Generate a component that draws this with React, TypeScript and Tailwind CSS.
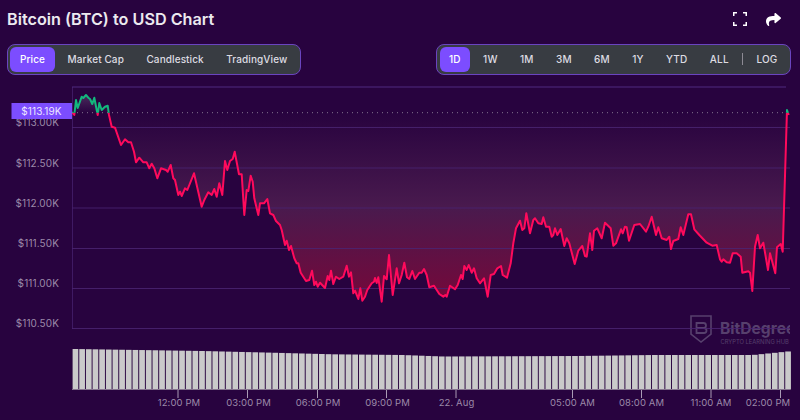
import { FaShare } from "react-icons/fa";

const line: number[][] = [
  [72, 112], [74.3, 115], [76, 100], [77.7, 108], [81.7, 96.7], [83.3, 98], [86, 95], [88.3, 97.7], [90, 99], [92.3, 104],
  [94.3, 97.7], [96.7, 110], [97.7, 115], [99.3, 103], [101.7, 110], [105, 106.7], [107.7, 105.7], [109, 115], [111.7, 126.7], [115, 127.7],
  [121, 145], [125, 139.3], [128.3, 142.3], [131, 142.3], [134, 151.7], [136, 162.3], [139.3, 157.7], [143.3, 162.3], [146.7, 162.3], [149.3, 168.3],
  [151.7, 163.7], [154.3, 168.3], [157.3, 178.3], [161, 168.3], [166, 170], [167.7, 171.7], [170.7, 165], [173.3, 178.3], [175, 180], [178.3, 195],
  [180, 191.7], [181.7, 196], [185, 188.3], [187.3, 190], [194, 173.3], [201.7, 206.7], [204.3, 200], [208.3, 192.3], [211.7, 195], [214.3, 189],
  [216.7, 196.7], [219.3, 183.3], [222.3, 195], [225, 161], [227.3, 170], [230, 161], [232.7, 159], [234.7, 151.7], [239, 174.3], [241.7, 174.3],
  [244.3, 215], [246.7, 190], [248.3, 191], [250.7, 175.7], [252.7, 181.7], [254.3, 198.3], [258.3, 215], [260, 203.3], [264, 203.3], [267.3, 199],
  [270, 213.3], [273.3, 215], [276, 221], [280, 225], [281.7, 230], [285, 245], [286.7, 240.7], [289, 250], [291, 246], [294.3, 258.3],
  [296.7, 263.3], [298.3, 263.3], [300.7, 272.7], [306, 281], [309.3, 280], [312, 270.7], [314.3, 285], [316, 281.7], [317.7, 286.7], [320, 282.7],
  [325, 288], [327.7, 276], [329.3, 280], [331, 270.7], [333.3, 284], [336, 276.7], [339.3, 279], [343.3, 276.7], [346.7, 265.7], [349, 276.7],
  [351, 272.3], [353.3, 293.3], [355, 290.7], [358.3, 299], [360.3, 288.3], [362.3, 300.7], [365, 296.7], [367.3, 290], [371.7, 283.3], [374, 281.7],
  [375, 278], [376.7, 283], [378.3, 277.3], [381.7, 301.7], [384, 276], [386.7, 279.3], [389, 255], [392.7, 295], [396.7, 268.3], [399, 283.3],
  [401.7, 275], [404.3, 262.7], [407, 277.3], [409.3, 279], [412.3, 271], [415, 279], [419.3, 272.7], [421.7, 272.7], [424, 269], [426.7, 275],
  [429.3, 287.3], [434, 285.7], [439.3, 294], [443.3, 296.7], [445.3, 295], [446.7, 296.7], [450, 285.7], [455, 289.3], [457.7, 285], [461, 275],
  [462.7, 279], [464.3, 266], [466.7, 270], [468.7, 265], [471.7, 272.7], [474, 268.3], [476.7, 278.3], [480, 283.3], [484, 278.3], [487.7, 296.7],
  [490.7, 275], [494, 274], [497.3, 268.3], [501, 266], [502.7, 275], [507, 277.7], [510.7, 263.3], [513.3, 243.3], [516, 228.3], [520, 220.7],
  [522.3, 230], [524.3, 228.3], [526.3, 213.3], [530, 233.3], [533.3, 220], [535, 218.3], [538.3, 223.3], [541.7, 224], [543.3, 217.3], [546, 226.7],
  [549.3, 226.7], [551.7, 236.7], [553.3, 235], [555, 228.3], [557.3, 235], [560.7, 229], [564.3, 246], [566.7, 238.3], [569.3, 243.3], [574.7, 264],
  [578.3, 250.7], [582.3, 246], [585, 256], [586.7, 256.7], [590, 233.3], [592.3, 250], [594, 230.7], [597.3, 228.3], [601.7, 238.3], [605, 222.7],
  [610.7, 228.3], [613.3, 245.7], [616, 243.3], [621, 229.3], [622.7, 233.3], [625, 226.7], [626.7, 227.3], [629, 240.7], [634.3, 225], [640, 224],
  [646, 231.7], [648.3, 226.7], [651.7, 216.7], [656, 235], [658.3, 227.3], [661.7, 238.3], [666.7, 240], [669.3, 236.7], [671, 249], [673.3, 241],
  [678.3, 239], [680.7, 227.3], [683.3, 235], [688.3, 214.3], [691, 214.3], [694.3, 229.3], [699.3, 235], [706.7, 242.7], [712.3, 245.7], [716.7, 245],
  [720, 259.3], [721.7, 261.7], [723.3, 259.3], [726.7, 262.3], [730, 262.7], [732.7, 253.3], [736.7, 253.3], [740.7, 256.7], [742.3, 272.7], [748.3, 271.3],
  [750, 272.7], [752.3, 291], [755, 246.7], [757.7, 235], [760, 248.3], [763.3, 242.7], [768, 270], [770, 253.3], [775.3, 273.3], [777, 247.3],
  [780.7, 244], [782.7, 251.7], [787, 110], [788.7, 115],
];

const linePath = "M" + line.map((p) => p.join(" ")).join("L");
const areaPath = linePath + "L788.7 112.7L72 112.7Z";

const gridY = [127.5, 168, 208, 248.5, 288.5, 328.5];
const yLabels = ["$113.00K", "$112.50K", "$112.00K", "$111.50K", "$111.00K", "$110.50K"];
const xLabels: [number, number, string][] = [
  [178, 179, "12:00 PM"],
  [247.5, 248.5, "03:00 PM"],
  [317.5, 318, "06:00 PM"],
  [386.5, 387.5, "09:00 PM"],
  [456, 456.5, "22. Aug"],
  [572.5, 572.5, "05:00 AM"],
  [641.5, 641.5, "08:00 AM"],
  [711, 711, "11:00 AM"],
  [780.5, 768, "02:00 PM"],
];

// top edge of the volume bars along x
const volumeTop = (x: number) => {
  const stops = [[72, 349], [136, 350], [200, 351], [270, 352.7], [330, 354.3], [400, 355], [440, 356.5], [575, 356], [650, 355], [750, 355], [770, 353], [790, 351]];
  for (let i = 1; i < stops.length; i++) {
    if (x <= stops[i][0]) {
      const [x0, y0] = stops[i - 1];
      const [x1, y1] = stops[i];
      return y0 + ((x - x0) / (x1 - x0)) * (y1 - y0);
    }
  }
  return 351;
};
const bars = Array.from({ length: 108 }, (_, i) => 72.6 + i * 6.66);

const Tab = ({ label, active, wide }: { label: string; active?: boolean; wide?: boolean }) => (
  <button
    className={`h-[25px] rounded-[6px] text-[10px] font-medium ${wide ? "px-[10px] tracking-[0.1px]" : "px-[9px] tracking-[0.2px]"} ${active ? "bg-[#7c4dff] text-white" : "text-[#dedce2]"}`}
  >
    {label}
  </button>
);

const App = () => {
  return (
    <div className="w-[800px] h-[420px] overflow-hidden bg-[#28033f] font-['Inter',sans-serif]">
      <div className="flex items-center justify-between h-[38px] pl-[7px] pr-[19px]">
        <h1 className="text-[16.2px] font-semibold text-[#ece9ef]">Bitcoin (BTC) to USD Chart</h1>
        <div className="flex items-center gap-[19px]">
          <svg width="14" height="14" viewBox="0 0 14 14" fill="none" stroke="#fff" strokeWidth="1.5">
            <path d="M.75 4V.75H4M10 .75h3.25V4M13.25 10v3.25H10M4 13.25H.75V10" />
          </svg>
          <FaShare size={15} color="#fff" />
        </div>
      </div>
      <div className="flex items-center justify-between h-[32px] mt-[5px] pl-[6.5px] pr-[9.5px]">
        <div className="flex items-center gap-[2.5px] h-[31px] px-[2.5px] rounded-[8px] border border-[#6a45c0] bg-[#383c42]">
          <Tab label="Price" active wide />
          <Tab label="Market Cap" wide />
          <Tab label="Candlestick" wide />
          <Tab label="TradingView" wide />
        </div>
        <div className="flex items-center gap-[4.3px] h-[31px] px-[3px] rounded-[8px] border border-[#6a45c0] bg-[#383c42]">
          <Tab label="1D" active />
          <Tab label="1W" />
          <Tab label="1M" />
          <Tab label="3M" />
          <Tab label="6M" />
          <Tab label="1Y" />
          <Tab label="YTD" />
          <Tab label="ALL" />
          <div className="w-px h-[12px] bg-[#8d8a94]" />
          <Tab label="LOG" />
        </div>
      </div>
      <svg width="800" height="345" viewBox="0 75 800 345" className="block">
        <defs>
          <linearGradient id="area" gradientUnits="userSpaceOnUse" x1="0" y1="113" x2="0" y2="300">
            <stop offset="0" stopColor="#28033f" />
            <stop offset="0.5" stopColor="#491a4e" />
            <stop offset="1" stopColor="#75083a" />
          </linearGradient>
          <linearGradient id="areaUp" gradientUnits="userSpaceOnUse" x1="0" y1="95" x2="0" y2="113">
            <stop offset="0" stopColor="#4a2a5c" />
            <stop offset="1" stopColor="#28033f" />
          </linearGradient>
          <clipPath id="below">
            <rect x="60" y="112.7" width="740" height="200" />
          </clipPath>
          <clipPath id="above">
            <rect x="60" y="80" width="740" height="32.7" />
          </clipPath>
          <clipPath id="logo">
            <rect x="680" y="310" width="110" height="40" />
          </clipPath>
        </defs>

        {/* watermark */}
        <g clipPath="url(#logo)" className="fill-[#57406d]">
          <path d="M691 316h20v18l-10 8-10-8z" fill="none" stroke="#57406d" strokeWidth="1.6" />
          <path
            d="M696.5 323h7a2.2 2.2 0 0 1 0 5h-7zM696.5 328h7.5a2.5 2.5 0 0 1 0 5h-7.5z"
            fill="none"
            stroke="#57406d"
            strokeWidth="1.8"
          />
          <text x="720" y="334" className="text-[15.6px] font-bold">BitDegree</text>
          <text x="720.5" y="344" className="text-[5.8px]">CRYPTO LEARNING HUB</text>
        </g>

        <path d={areaPath} fill="url(#area)" clipPath="url(#below)" />
        <path d={areaPath} fill="url(#areaUp)" clipPath="url(#above)" />

        <path d="M72.5 87V329" stroke="#3f1a63" />
        <path d="M72 87H786" stroke="#4e2a80" />
        {gridY.map((y) => (
          <path key={y} d={`M72 ${y}H790`} stroke="#4a2472" strokeWidth={y === 328.5 ? 1 : 1.2} strokeOpacity="0.85" />
        ))}
        {yLabels.map((t, i) => (
          <text key={t} x="59" y={gridY[i] - 1.2} textAnchor="end" className="fill-[#9c8aa9] text-[10px] tracking-[0.1px]">
            {t}
          </text>
        ))}

        <path d="M72 112.7H788" stroke="#85768f" strokeDasharray="1 4" />

        <path d={linePath} fill="none" stroke="#ff0a5c" strokeWidth="2" strokeLinejoin="round" clipPath="url(#below)" />
        <path d={linePath} fill="none" stroke="#13b77d" strokeWidth="2" strokeLinejoin="round" clipPath="url(#above)" />

        {/* price tag */}
        <rect x="11.5" y="103" width="60.5" height="16" fill="#7c4dff" />
        <text x="41.5" y="114.7" textAnchor="middle" className="fill-[#ece6ff] text-[10px] tracking-[0.1px]">
          $113.19K
        </text>

        {/* volume */}
        {bars.map((x) => (
          <rect key={x} x={x} y={volumeTop(x)} width="5.7" height={389.5 - volumeTop(x)} fill="#cacaca" />
        ))}
        <path d="M72 389.5H790" stroke="#86748f" />

        {xLabels.map(([tick, x, t]) => (
          <g key={t}>
            <path d={`M${tick} 390V398`} stroke="#a99bb5" />
            <text x={x} y="406" textAnchor="middle" className="fill-[#9c8aa9] text-[9.5px] tracking-[0.1px]">
              {t}
            </text>
          </g>
        ))}
      </svg>
    </div>
  );
};

export default App;
